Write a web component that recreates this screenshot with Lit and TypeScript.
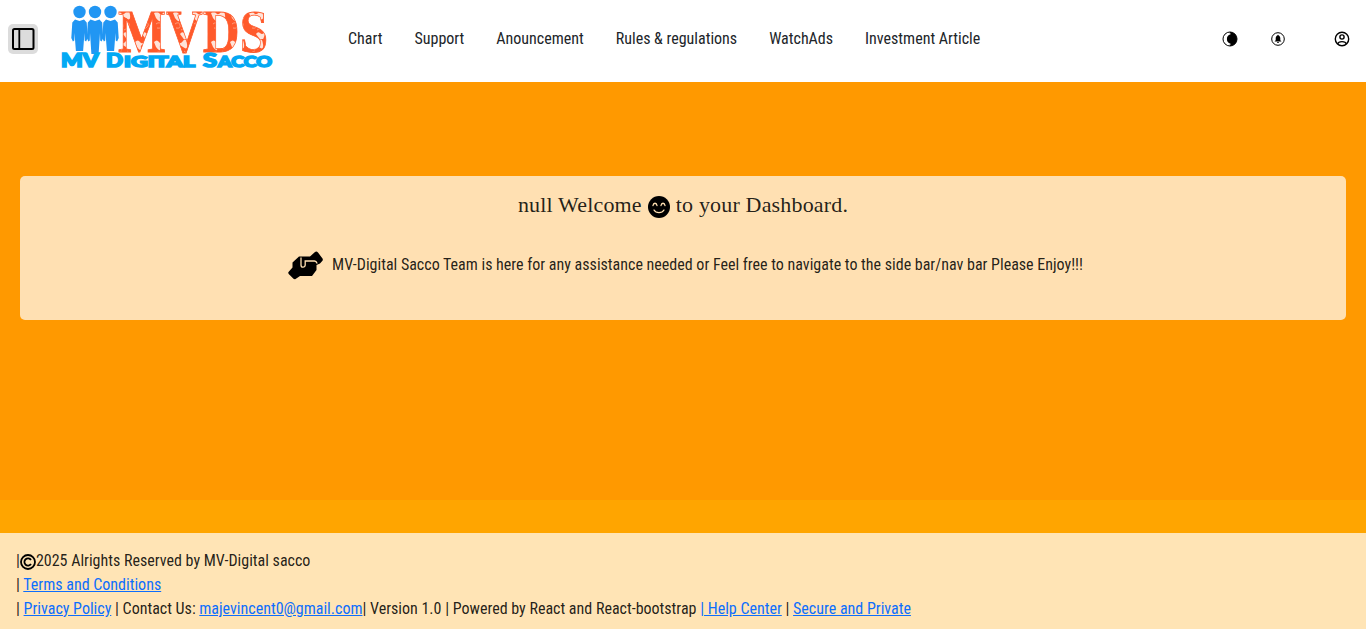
import { LitElement, html, svg, css } from "lit";
import { customElement } from "lit/decorators.js";

const person = (x: number, foot: number) => svg`
  <g transform="translate(${x} 0)">
    <circle cx="0" cy="12" r="6.2"/>
    <path d="M-4.500 19.500L0 21L4.500 19.500L7.200 22.500L8.200 38L6.600 41.500L5.200 40.500L5 33L3.600 ${foot}H-3.600L-5 33L-5.200 40.500L-6.600 41.500L-8.200 38L-7.200 22.500Z"/>
  </g>`;

@customElement("app-root")
export class AppRoot extends LitElement {
  static styles = css`
    :host { display: flex; flex-direction: column; height: 629px; overflow: hidden; background: #ffa500;
      font-family: "Roboto Condensed", Roboto, sans-serif; font-stretch: 75%; font-size: 16px; line-height: 24px; color: rgba(0, 0, 0, .87); }
    * { box-sizing: border-box; }
    svg { display: block; flex: none; }
    header { height: 82px; background: #fff; display: flex; align-items: flex-start; flex: none; }
    .toggle { margin: 24px 0 0 8px; width: 30px; height: 30px; border-radius: 5px; background: #dcdcdc; border: 0; padding: 3px; }
    .logo { margin-left: 20px; overflow: visible; }
    nav { display: flex; gap: 32px; margin: 27px 0 0 70px; white-space: nowrap; color: #212529; }
    .tools { display: flex; margin: 31px 16px 0 auto; align-items: center; }
    .bell { margin-left: 33px; }
    .user { margin-left: 49px; }
    main { height: 418px; flex: none; background: #ff9900; padding: 94px 20px 0; }
    .card { height: 144px; border-radius: 5px; background: #ffe0b2; display: flex; flex-direction: column; align-items: center; }
    h1 { margin: 13px 0 0; height: 32px; font: 400 22px/32px "Liberation Serif", serif; letter-spacing: .17px; display: flex; white-space: pre; }
    .smile { margin: 7px 6px 0; }
    .msg { display: flex; margin: 29px 0 0 5px; height: 30px; white-space: nowrap; }
    .msg span { padding: 3px 0 0 9px; }
    footer { margin-top: 33px; height: 96px; background: #ffe4b5; padding: 16px; flex: none; white-space: nowrap; }
    .line { display: flex; white-space: pre; }
    .copy { margin-top: 5px; }
    a { color: #0d6efd; text-decoration: underline; }
  `;

  render() {
    return html`
      <header>
        <button class="toggle" aria-label="Toggle sidebar">
          <svg width="24" height="24" viewBox="0 0 24 24" fill="none" stroke="#000" stroke-width="2"><rect x="2" y="2" width="20.500" height="20" rx="1.5"/><path d="M8.300 2v20" stroke-width="1.8"/></svg>
        </button>
        <svg class="logo" width="220" height="76" viewBox="58 0 220 76">
          <defs>
            <pattern id="floral" width="19" height="29" patternUnits="userSpaceOnUse" y="10">
              <rect width="19" height="29" fill="#ff5a2b"/>
              <path d="M2 3q3-3 5 0t5-1 4 3-4 3-4 1-4-1zM9 24q2-3 4-1t4 0 0 4-5 1z" fill="#ffe3d8"/>
              <path d="M4 14q4-3 5 1t-4 3M13 12q4 2 1 5t-4 3" fill="none" stroke="#ff9a78" stroke-width="1"/>
            </pattern>
          </defs>
          <text x="118" y="51.500" font-family="Liberation Serif" font-weight="700" font-size="61" fill="url(#floral)" stroke="#ff5a2b" stroke-width=".8" textLength="150" lengthAdjust="spacingAndGlyphs">MVDS</text>
          <g fill="#2196f3">${person(79.5, 51)}${person(110.5, 51)}${person(95, 54)}</g>
          <text y="67" font-family="Lato" font-weight="900" font-size="18" fill="#03a9f4" stroke="#03a9f4" stroke-width="1.600"><tspan x="61" textLength="37" lengthAdjust="spacingAndGlyphs">MV</tspan> <tspan x="106" textLength="17" lengthAdjust="spacingAndGlyphs">D</tspan><tspan x="124" font-size="15.500" textLength="71" lengthAdjust="spacingAndGlyphs">IGITAL</tspan> <tspan x="203" textLength="14" lengthAdjust="spacingAndGlyphs">S</tspan><tspan x="218" font-size="15.500" textLength="54" lengthAdjust="spacingAndGlyphs">ACCO</tspan></text>
        </svg>
        <nav><span>Chart</span><span>Support</span><span>Anouncement</span><span>Rules &amp; regulations</span><span>WatchAds</span><span>Investment Article</span></nav>
        <div class="tools">
          <svg width="16" height="16" viewBox="0 0 16 16"><circle cx="8" cy="8" r="7" fill="#fff" stroke="#000"/><path d="M8 1a7 7 0 0 1 0 14l-.5-1.300C9 13.500 9 13 8.500 12.800a5 5 0 0 1 0-9.600C9 3 9 2.400 7.500 2.200z"/></svg>
          <svg class="bell" width="14" height="14" viewBox="0 0 14 14"><circle cx="7" cy="7" r="6.300" fill="none" stroke="#000"/><path d="M3.500 9.500l1.200-1.300V6C4.700 4.600 5.500 3.700 6.400 3.400a.6.6 0 0 1 1.200 0C8.500 3.700 9.300 4.600 9.300 6v2.200l1.200 1.300zM6 10h2a1 1 0 0 1-2 0z"/></svg>
          <svg class="user" width="16" height="16" viewBox="0 0 16 16" fill="none" stroke="#000" stroke-width="1.400"><circle cx="8" cy="8" r="6.700"/><circle cx="8" cy="6" r="2.100"/><path d="M3.500 13c1-3.200 8-3.200 9 0"/></svg>
        </div>
      </header>
      <main>
        <section class="card">
          <h1>null Welcome<svg class="smile" width="22" height="22" viewBox="0 0 22 22"><circle cx="11" cy="11" r="11"/><path d="M5 9.500c.5-3 3.500-3 4 0M13 9.500c.5-3 3.500-3 4 0M6 14c2 3.600 8 3.600 10 0" fill="none" stroke="#ffe0b2" stroke-width="1.300" stroke-linecap="round"/></svg>to your Dashboard.</h1>
          <div class="msg">
            <svg width="35" height="30" viewBox="0 0 35 30"><path d="M.5 22L4.500 17.500V12.500L11 6.500h11l5-4.500q1.500-1 3 .500l4.500 6q.8 1.500-.3 2.500l-2.200 2.500-3.500 1.500v5l-4.500 6H12l-4.500 3q-1 .5-2-.300L.7 24q-.8-1-.2-2z"/><path d="M13 7.500v7.500q0 2.200 2 2.200t2.200-2.200v-4h9.300q1.700 0 2.700 2.500" stroke="#ffe0b2" fill="none" stroke-width="1.300"/></svg>
            <span>MV-Digital Sacco Team is here for any assistance needed or Feel free to navigate to the side bar/nav bar Please Enjoy!!!</span>
          </div>
        </section>
      </main>
      <footer>
        <div class="line">|<svg class="copy" width="16" height="16" viewBox="0 0 16 16" fill="none" stroke="#000" stroke-width="1.800"><circle cx="8" cy="8" r="7"/><path d="M11 6a3.600 3.600 0 1 0 0 4"/></svg>2025 Alrights Reserved by MV-Digital sacco</div>
        <div>| <a>Terms and Conditions</a></div>
        <div>| <a>Privacy Policy</a> | Contact Us: <a>majevincent0@gmail.com</a>| Version 1.0 | Powered by React and React-bootstrap <a>| Help Center</a> | <a>Secure and Private</a></div>
      </footer>
    `;
  }
}
